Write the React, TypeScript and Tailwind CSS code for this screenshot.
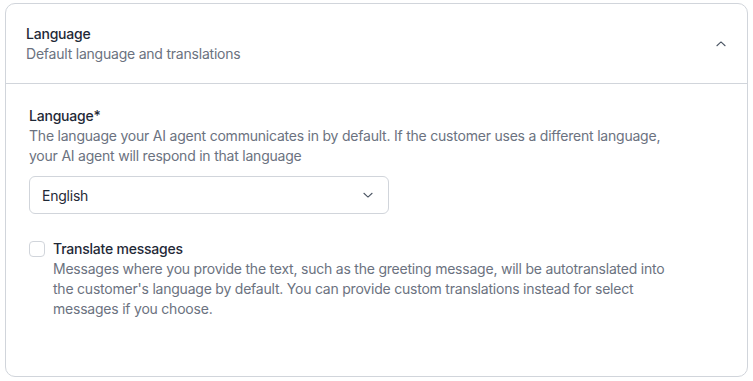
import React, { useState } from "react";

const ChevronUp = () => (
  <svg width="14" height="14" viewBox="0 0 24 24" fill="none" stroke="#4b5563" strokeWidth="1.8" strokeLinecap="round" strokeLinejoin="round">
    <path d="M5 15l7-6.5 7 6.5" />
  </svg>
);

const ChevronDown = () => (
  <svg width="14" height="14" viewBox="0 0 24 24" fill="none" stroke="#4b5563" strokeWidth="1.8" strokeLinecap="round" strokeLinejoin="round">
    <path d="M5 9l7 6.5 7-6.5" />
  </svg>
);

export default function App() {
  const [translate, setTranslate] = useState(false);

  return (
    <div
      className="w-[753px] h-[381px] bg-white pt-[3px] px-[5px] tracking-[-0.22px]"
      style={{ fontFamily: "Inter, 'Liberation Sans', sans-serif" }}
    >
      <div className="h-[374px] border border-[#d1d5db] rounded-[10px] bg-white">
        {/* header */}
        <div className="flex items-center justify-between pl-[20px] pr-[14px] h-[80px] border-b border-[#d1d5db]">
          <div>
            <div className="text-[14px] leading-5 font-medium text-[#1f2937]">Language</div>
            <div className="text-[14px] leading-5 text-[#6b7280]">Default language and translations</div>
          </div>
          <button className="w-6 h-6 flex items-center justify-center">
            <ChevronUp />
          </button>
        </div>

        {/* body */}
        <div className="pl-[23px] pr-6 pt-[22px]">
          <div className="text-[14px] leading-5 font-medium text-[#1f2937]">Language*</div>
          <div className="text-[14px] leading-5 text-[#6b7280] w-[645px]">
            The language your AI agent communicates in by default. If the customer uses a different language, your AI agent will respond in that language
          </div>
          <div className="mt-[10px] w-[360px] h-[38px] border border-[#d1d5db] rounded-md flex items-center justify-between pl-3 pr-[13px]">
            <span className="text-[14px] text-[#1f2937]">English</span>
            <ChevronDown />
          </div>

          <div className="mt-[25px] flex items-start gap-[8px]">
            <button
              onClick={() => setTranslate(!translate)}
              className="mt-[2px] w-4 h-4 rounded-[4px] border border-[#d1d5db] bg-white shrink-0"
            />
            <div>
              <div className="text-[14px] leading-5 font-medium text-[#1f2937]">Translate messages</div>
              <div className="text-[14px] leading-5 text-[#6b7280] w-[630px]">
                Messages where you provide the text, such as the greeting message, will be autotranslated into the customer's language by default. You can provide custom translations instead for select messages if you choose.
              </div>
            </div>
          </div>
        </div>
      </div>
    </div>
  );
}
